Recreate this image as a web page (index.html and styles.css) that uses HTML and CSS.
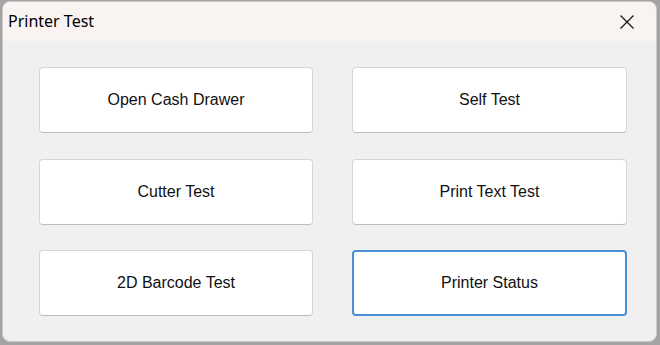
FILE: index.html
```html
<!DOCTYPE html>
<html lang="en">
<head>
  <meta charset="UTF-8">
  <title>Printer Test</title>
  <link rel="stylesheet" href="styles.css">
</head>
<body>
  <div class="window">
    <div class="titlebar">
      <span class="title">Printer Test</span>
      <button class="close" aria-label="Close">
        <svg width="16" height="16" viewBox="0 0 16 16">
          <path d="M1.5 1.5 L14.5 14.5 M14.5 1.5 L1.5 14.5" stroke="#1a1a1a" stroke-width="1.3" fill="none"/>
        </svg>
      </button>
    </div>
    <div class="content">
      <button class="btn">Open Cash Drawer</button>
      <button class="btn">Self Test</button>
      <button class="btn">Cutter Test</button>
      <button class="btn">Print Text Test</button>
      <button class="btn">2D Barcode Test</button>
      <button class="btn focused">Printer Status</button>
    </div>
  </div>
</body>
</html>
```

FILE: styles.css
```css
* {
  margin: 0;
  padding: 0;
  box-sizing: border-box;
}

body {
  width: 660px;
  height: 345px;
  background: #a3a3a3;
  padding: 1px 3px 3px 2px;
  overflow: hidden;
}

.window {
  width: 655px;
  height: 341px;
  background: #f0f0f0;
  border: 1px solid #c9c9c9;
  border-radius: 8px;
  overflow: hidden;
  display: flex;
  flex-direction: column;
}

.titlebar {
  height: 39px;
  background: #f9f4f2;
  display: flex;
  align-items: center;
  justify-content: space-between;
  padding-left: 5px;
}

.title {
  font-family: "Noto Sans", "Open Sans", sans-serif;
  font-size: 16px;
  color: #000;
  margin-top: -2px;
}

.close {
  width: 46px;
  height: 38px;
  border: none;
  background: transparent;
  display: flex;
  align-items: center;
  justify-content: center;
  margin-right: 6px;
}

.content {
  display: grid;
  grid-template-columns: 274px 275px;
  grid-auto-rows: 66px;
  column-gap: 39px;
  row-gap: 25.5px;
  padding: 26px 0 0 36px;
}

.btn {
  background: #fff;
  border: 1px solid #d5d5d5;
  border-bottom-color: #bdbdbd;
  border-radius: 4px;
  font-family: "Liberation Sans", Arial, sans-serif;
  font-size: 16px;
  color: #111;
}

.btn.focused {
  border: 2px solid #4a90d4;
}
```
